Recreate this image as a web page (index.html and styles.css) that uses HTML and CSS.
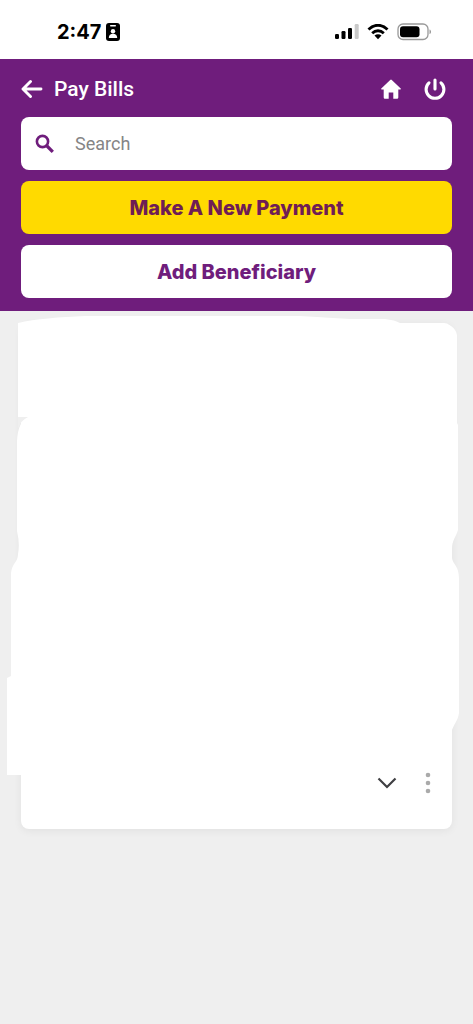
FILE: index.html
```html
<!DOCTYPE html>
<html lang="en">
<head>
<meta charset="utf-8">
<meta name="viewport" content="width=device-width, initial-scale=1">
<title>Pay Bills</title>
<link rel="stylesheet" href="styles.css">
</head>
<body>
<div class="status">
  <div class="status-left">
    <span class="time">2:47</span>
    <svg width="14" height="18" viewBox="0 0 14 18" aria-hidden="true"><rect width="14" height="18" rx="3" fill="#000"/><rect x="4" y="2" width="6" height="1.5" rx=".7" fill="#fff"/><circle cx="7" cy="8.2" r="2.200" fill="#fff"/><path d="M2.800 15c0-3 1.700-4.200 4.200-4.200s4.200 1.200 4.200 4.200z" fill="#fff"/></svg>
  </div>
  <div class="status-right">
    <svg width="24" height="16" viewBox="0 0 24 16" aria-hidden="true"><rect x="0" y="10" width="4" height="5" rx="1.200"/><rect x="6.500" y="7" width="4" height="8" rx="1.200"/><rect x="13" y="4" width="4" height="11" rx="1.200"/><rect x="19.700" y="0" width="4" height="15" rx="1.200" fill="#c9c9c9"/></svg>
    <svg width="22" height="16" viewBox="0 0 22 16" aria-hidden="true"><g fill="none" stroke="#000" stroke-width="2.800"><path d="M1.500 5.500C7-.2 15-.2 20.500 5.500"/><path d="M5.200 9.200c3.400-3.300 8.200-3.300 11.600 0"/></g><path d="M7.500 11.500c2-1.700 5-1.700 7 0L11 15.200z"/></svg>
    <svg width="35" height="18" viewBox="0 0 35 18" aria-hidden="true"><rect x="1" y="1" width="30" height="15.500" rx="5" fill="#fff" stroke="#999" stroke-width="1.300"/><rect x="3" y="3.200" width="19.500" height="11" rx="3"/><path d="M32.500 6.500c2 .6 2 4 0 4.600z" fill="#999"/></svg>
  </div>
</div>
<header class="header">
  <div class="bar">
    <button class="icon-button" aria-label="Back"><svg width="22" height="20" viewBox="0 0 22 20"><path d="M20 10H3M9.500 2.500L2 10l7.500 7.500" fill="none" stroke="#fff" stroke-width="2.900" stroke-linecap="round" stroke-linejoin="round"/></svg></button>
    <h1 class="title">Pay Bills</h1>
    <button class="icon-button" aria-label="Home"><svg width="20" height="20" viewBox="0 0 20 20"><path d="M9.200.9a1.200 1.200 0 0 1 1.600 0L19.700 9.500c.5.500.2 1-.5 1H17.300V18.500a1.200 1.200 0 0 1-1.200 1.200H12.300V13.500H7.700V19.700H3.900A1.200 1.200 0 0 1 2.700 18.500V10.500H.8c-.7 0-1-.5-.5-1z" fill="#fff"/></svg></button>
    <button class="icon-button power" aria-label="Log out"><svg width="22" height="22" viewBox="0 0 22 22"><path d="M11 2v9M5 4.800a8.900 8.900 0 1 0 12 0" fill="none" stroke="#fff" stroke-width="3.100" stroke-linecap="round"/></svg></button>
  </div>
  <div class="actions">
    <label class="search">
      <svg width="20" height="20" viewBox="0 0 20 20" aria-hidden="true"><circle cx="7.500" cy="7.500" r="5.600" fill="none" stroke="#6f1d7c" stroke-width="2.600"/><path d="M12 12l5.800 5.800" stroke="#6f1d7c" stroke-width="3.200"/></svg>
      <input class="search-input" type="search" placeholder="Search" aria-label="Search">
    </label>
    <button class="action primary">Make A New Payment</button>
    <button class="action">Add Beneficiary</button>
  </div>
</header>
<main class="content">
  <section class="card" aria-label="Beneficiaries">
    <div class="card-actions">
      <button class="icon-button" aria-label="Expand"><svg width="20" height="12" viewBox="0 0 20 12"><path d="M1.500 1.500L10 10l8.500-8.500" fill="none" stroke="#3f3f42" stroke-width="2.200"/></svg></button>
      <button class="icon-button" aria-label="More options"><svg width="6" height="22" viewBox="0 0 6 22" fill="#aaa"><circle cx="3" cy="3" r="2.300"/><circle cx="3" cy="11" r="2.300"/><circle cx="3" cy="19" r="2.300"/></svg></button>
    </div>
  </section>
  <svg class="cover" viewBox="0 0 473 518" preserveAspectRatio="none" aria-hidden="true"><path d="M18 12C35 8 60 6 85 5H300L350 8L385 8Q395 9 400 12H440Q455 13 457 24V112L458 114V219C456 226 452 229 452 238V247C453 254 459 254 459 268V402C458 410 453 414 451 422V464H7V367L11 365V265C11 252 18 252 18 243Q20 233 17 220V130Q18 110 28 107L18 106Z" fill="#fff"/><path d="M18 106H28Q21 109 18 118Z" fill="#efefef"/></svg>
</main>
</body>
</html>
```

FILE: styles.css
```css
* { box-sizing: border-box; }

body {
  margin: 0;
  min-height: 100vh;
  background: #efefef;
  font-family: Inter, "Liberation Sans", sans-serif;
}

svg { display: block; }

.status {
  display: flex;
  justify-content: space-between;
  height: 59px;
  padding: 5px 41px 0 57px;
  background: #fff;
}

.status-left,
.status-right {
  display: flex;
  align-items: center;
}

.status-left { gap: 5px; }
.status-right { gap: 8px; }

.time {
  font-size: 20px;
  font-weight: 700;
}

.header {
  padding: 0 21px 13px;
  background: #6f1d7c;
}

.bar {
  display: flex;
  align-items: center;
  height: 58px;
  padding: 2px 6px 0 0;
}

.title {
  flex: 1;
  margin: 0 0 0 11px;
  color: #fff;
  font: 500 21px/24px Roboto, sans-serif;
}

.icon-button {
  padding: 0;
  border: 0;
  background: none;
}

.power { margin-left: 23px; }

.actions {
  display: grid;
  gap: 11px;
}

.search,
.action {
  height: 53px;
  border-radius: 8px;
  background: #fff;
}

.search {
  display: flex;
  align-items: center;
  gap: 20px;
  padding: 0 14px;
}

.search-input {
  flex: 1;
  min-width: 0;
  padding: 0;
  border: 0;
  outline: 0;
  background: none;
  font: 400 18px/24px Roboto, sans-serif;
}

.search-input::placeholder { color: #858585; }

.action {
  padding: 0;
  border: 0;
  color: #6f1d7c;
  font: 800 20px/24px Inter, sans-serif;
}

.primary {
  background: #ffda00;
  color: #6f1d55;
}

.content {
  position: relative;
  padding-top: 12px;
}

.card {
  display: flex;
  flex-direction: column;
  justify-content: flex-end;
  min-height: 506px;
  margin: 0 21px;
  border-radius: 8px;
  background: #fff;
  box-shadow: 0 2px 8px #0000000f;
}

.card-actions {
  position: relative;
  z-index: 1;
  display: flex;
  justify-content: flex-end;
  align-items: center;
  gap: 28px;
  padding: 0 21px 35px;
}

.cover {
  position: absolute;
  inset: 0;
  width: 100%;
  height: 100%;
}
```
